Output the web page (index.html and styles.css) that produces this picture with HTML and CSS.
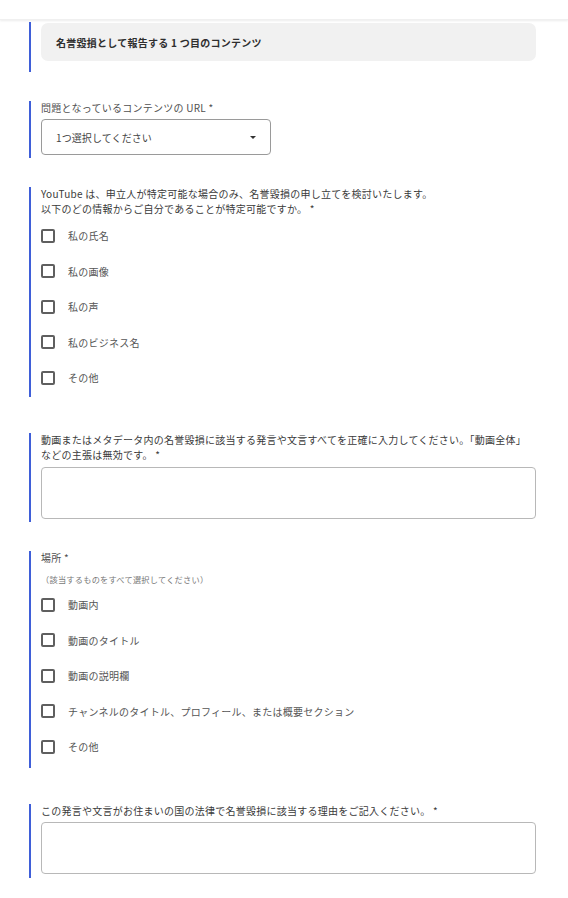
FILE: index.html
```html
<!DOCTYPE html>
<html lang="ja">
<head>
<meta charset="utf-8">
<title>名誉毀損の報告</title>
<link rel="stylesheet" href="styles.css">
</head>
<body>
<header class="topbar"></header>
<main class="form">
  <section class="q q-head">
    <div class="head-box">名誉毀損として報告する 1 つ目のコンテンツ</div>
  </section>

  <section class="q q-url">
    <div class="q-label">問題となっているコンテンツの URL *</div>
    <div class="select">
      <span class="select-text">1つ選択してください</span>
      <span class="caret"></span>
    </div>
  </section>

  <section class="q q-ident after-list">
    <div class="q-text">YouTube は、申立人が特定可能な場合のみ、名誉毀損の申し立てを検討いたします。<br>以下のどの情報からご自分であることが特定可能ですか。 *</div>
    <ul class="opts">
      <li class="opt"><span class="cb"></span><span class="opt-label">私の氏名</span></li>
      <li class="opt"><span class="cb"></span><span class="opt-label">私の画像</span></li>
      <li class="opt"><span class="cb"></span><span class="opt-label">私の声</span></li>
      <li class="opt"><span class="cb"></span><span class="opt-label">私のビジネス名</span></li>
      <li class="opt"><span class="cb"></span><span class="opt-label">その他</span></li>
    </ul>
  </section>

  <section class="q q-words">
    <div class="q-text">動画またはメタデータ内の名誉毀損に該当する発言や文言すべてを正確に入力してください。「動画全体」<br>などの主張は無効です。 *</div>
    <div class="textarea"></div>
  </section>

  <section class="q q-place after-list">
    <div class="q-label">場所 *</div>
    <div class="hint">（該当するものをすべて選択してください）</div>
    <ul class="opts">
      <li class="opt"><span class="cb"></span><span class="opt-label">動画内</span></li>
      <li class="opt"><span class="cb"></span><span class="opt-label">動画のタイトル</span></li>
      <li class="opt"><span class="cb"></span><span class="opt-label">動画の説明欄</span></li>
      <li class="opt"><span class="cb"></span><span class="opt-label">チャンネルのタイトル、プロフィール、または概要セクション</span></li>
      <li class="opt"><span class="cb"></span><span class="opt-label">その他</span></li>
    </ul>
  </section>

  <section class="q q-reason">
    <div class="q-text">この発言や文言がお住まいの国の法律で名誉毀損に該当する理由をご記入ください。 *</div>
    <div class="textarea"></div>
  </section>
</main>
</body>
</html>
```
FILE: styles.css
```css
html, body {
  margin: 0;
  padding: 0;
  background: #ffffff;
}
body {
  font-family: "Noto Sans CJK JP", "Noto Sans", sans-serif;
  font-size: 10px;
  letter-spacing: 0.25px;
  color: #3c3c3c;
}
.topbar {
  height: 19px;
  background: #ffffff;
  box-shadow: 0 1px 2px rgba(0, 0, 0, 0.08);
  border-bottom: 1px solid #f0f0f0;
}
.form {
  display: flex;
  flex-direction: column;
  gap: 29px;
  padding: 2px 32px 0 29px;
}
.q {
  border-left: 2px solid #3f5fd8;
  padding-left: 10px;
}
.after-list {
  margin-bottom: 7px;
}
.q-head {
  padding-top: 1px;
  padding-bottom: 11px;
}
.head-box {
  height: 38px;
  display: flex;
  align-items: center;
  padding-left: 15px;
  background: #f1f1f1;
  border-radius: 7px;
  font-weight: 700;
  color: #2e2e2e;
}
.q-label {
  line-height: 14px;
  color: #505050;
}
.q-text {
  line-height: 14.5px;
  color: #3a3a3a;
}
.q-url {
  padding-bottom: 3px;
}
.select {
  margin-top: 4px;
  width: 230px;
  height: 36px;
  box-sizing: border-box;
  border: 1px solid #9a9a9a;
  border-radius: 4px;
  display: flex;
  align-items: center;
  justify-content: space-between;
  padding: 0 14px 0 14px;
  color: #444444;
  letter-spacing: 0.1px;
}
.caret {
  width: 0;
  height: 0;
  border-left: 3px solid transparent;
  border-right: 3px solid transparent;
  border-top: 3px solid #333333;
}
.opts {
  list-style: none;
  margin: 0;
  padding: 0;
}
.q-ident .opts {
  margin-top: 2px;
}
.q-ident {
  padding-bottom: 1.5px;
}
.opt {
  height: 35.5px;
  display: flex;
  align-items: center;
  gap: 13px;
}
.cb {
  width: 14px;
  height: 14px;
  box-sizing: border-box;
  border: 2px solid #5f5f5f;
  border-radius: 2px;
  flex: none;
}
.opt-label {
  color: #555555;
}
.textarea {
  height: 52px;
  box-sizing: border-box;
  border: 1px solid #b8b8b8;
  border-radius: 4px;
}
.q-words {
  padding-bottom: 3px;
}
.q-words .textarea {
  margin-top: 5px;
}
.q-place {
  padding-bottom: 3.5px;
}
.hint {
  margin-top: 7px;
  line-height: 14px;
  font-size: 8.2px;
  color: #777777;
}
.q-place .opts {
  margin-top: 1px;
}
.q-reason {
  padding-bottom: 4px;
}
.q-reason .textarea {
  margin-top: 3.5px;
}
```
